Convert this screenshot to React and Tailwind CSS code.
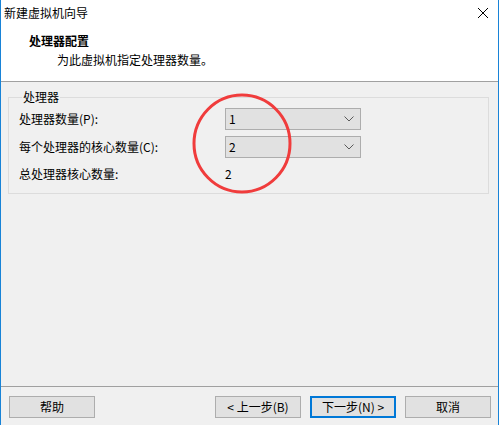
import React from "react";

const font = { fontFamily: '"Noto Sans CJK SC", "Noto Sans", sans-serif' };

function Chevron() {
  return (
    <svg width="10" height="6" viewBox="0 0 10 6" className="mr-[6px]">
      <path d="M0.5 0.5 L5 5 L9.5 0.5" fill="none" stroke="#5a5a5a" strokeWidth="1" />
    </svg>
  );
}

function Select({ value }) {
  return (
    <div className="w-[136px] h-[22px] border border-[#adadad] bg-[#e1e1e1] flex items-center justify-between pl-[3px]">
      <span className="text-[12px] leading-[16px] text-black">{value}</span>
      <Chevron />
    </div>
  );
}

function Button({ children, primary }) {
  return (
    <div
      className={
        "w-[86px] h-[22px] bg-[#e1e1e1] flex items-center justify-center text-[12px] leading-[16px] text-black " +
        (primary ? "border-2 border-[#0078d7]" : "border border-[#adadad]")
      }
    >
      {children}
    </div>
  );
}

export default function App() {
  return (
    <div className="w-[500px] h-[425px] bg-white relative" style={font}>
      <div className="w-[499px] h-[425px] border-l border-r border-[#1883d7] flex flex-col">
        {/* Header */}
        <div className="h-[81px] bg-white relative shrink-0">
          <div className="mt-[5px] ml-[3px] text-[12px] leading-[16px] text-black">新建虚拟机向导</div>
          <div className="mt-[12px] ml-[28px] text-[12px] leading-[16px] font-bold text-black">处理器配置</div>
          <div className="mt-[3px] ml-[56px] text-[12px] leading-[16px] text-black">为此虚拟机指定处理器数量。</div>
          <svg className="absolute left-[476px] top-[7px]" width="12" height="12" viewBox="0 0 12 12">
            <path d="M1 1 L11 11 M11 1 L1 11" stroke="#000" strokeWidth="1" />
          </svg>
        </div>
        <div className="h-px bg-[#a0a0a0] shrink-0" />
        {/* Body */}
        <div className="h-[304px] bg-[#f0f0f0] shrink-0 pt-[7px] pl-[7px]">
          <fieldset className="w-[481px] h-[105px] border border-[#dcdcdc] pl-[10px]">
            <legend className="ml-[3px] px-[1px] text-[12px] leading-[16px] text-black">处理器</legend>
            <div className="grid grid-cols-[206px_136px] mt-[3px] text-[12px] leading-[16px] text-black">
              <div className="h-[22px] flex items-center">处理器数量(P):</div>
              <Select value="1" />
              <div className="h-[22px] mt-[6px] flex items-center">每个处理器的核心数量(C):</div>
              <div className="mt-[6px]"><Select value="2" /></div>
              <div className="h-[22px] mt-[5px] flex items-center">总处理器核心数量:</div>
              <div className="h-[22px] mt-[5px] flex items-center">2</div>
            </div>
          </fieldset>
        </div>
        <div className="h-px bg-[#a0a0a0] shrink-0" />
        {/* Footer */}
        <div className="flex-1 bg-[#f0f0f0] flex items-start pt-[9px] pl-[8px] pr-[7px]">
          <Button>帮助</Button>
          <div className="flex-1" />
          <div className="flex gap-[9px]">
            <Button>&lt; 上一步(B)</Button>
            <Button primary>下一步(N) &gt;</Button>
            <Button>取消</Button>
          </div>
        </div>
      </div>
      {/* Red annotation circle */}
      <svg className="absolute left-[192px] top-[93px] pointer-events-none" width="100" height="101" viewBox="0 0 100 101">
        <ellipse cx="50" cy="50.5" rx="48" ry="48.5" fill="none" stroke="#f03c3c" strokeWidth="3" />
      </svg>
    </div>
  );
}
